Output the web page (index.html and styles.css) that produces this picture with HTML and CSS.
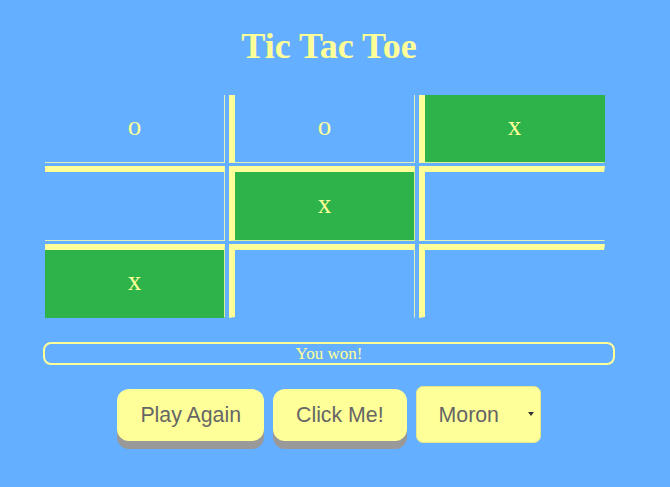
FILE: index.html
```html
<!DOCTYPE html>
<html lang="en">
<head>
<meta charset="utf-8">
<title>Tic Tac Toe</title>
<link rel="stylesheet" href="styles.css">
</head>
<body>
<div class="app">
  <h1 class="title">Tic Tac Toe</h1>
  <div class="board">
    <div class="row">
      <div class="cell">o</div>
      <div class="cell cell--inner">o</div>
      <div class="cell cell--inner cell--last cell--win">x</div>
    </div>
    <div class="row row--lower">
      <div class="cell"></div>
      <div class="cell cell--inner cell--win">x</div>
      <div class="cell cell--inner cell--last"></div>
    </div>
    <div class="row row--lower row--last">
      <div class="cell cell--win">x</div>
      <div class="cell cell--inner"></div>
      <div class="cell cell--inner cell--last"></div>
    </div>
  </div>
  <div class="status">You won!</div>
  <div class="controls">
    <button class="btn">Play Again</button>
    <button class="btn">Click Me!</button>
    <div class="picker">
      <select class="picker__select">
        <option>Moron</option>
      </select>
      <svg class="picker__arrow" width="6" height="4" viewBox="0 0 6 4"><path d="M0 0H6L3 4Z" fill="#333"/></svg>
    </div>
  </div>
</div>
</body>
</html>
```

FILE: styles.css
```css
html, body {
  margin: 0;
  padding: 0;
  background: #64afff;
}

body {
  font-family: "Liberation Serif", "Times New Roman", serif;
  color: #ffff99;
  min-height: 487px;
}

.app {
  width: 572px;
  margin-left: 43px;
  padding-bottom: 20px;
}

.title {
  margin: 27px 0 29px;
  font-size: 36px;
  line-height: 39px;
  font-weight: bold;
  text-align: center;
  color: #ffff99;
}

.board {
  display: flex;
  flex-direction: column;
  gap: 3px;
  padding-left: 2px;
}

.row {
  display: flex;
  gap: 4px;
}

.cell {
  width: 179px;
  height: 63.4px;
  box-sizing: content-box;
  padding-bottom: 4px;
  border-right: 1px solid rgba(255, 255, 170, 0.8);
  border-bottom: 1px solid rgba(255, 255, 170, 0.8);
  display: flex;
  align-items: center;
  justify-content: center;
  font-size: 27px;
  line-height: 27px;
  color: #ffff99;
}

.cell--inner {
  border-left: 6px solid #ffff99;
}

.cell--last {
  border-right-color: transparent;
}

.row--lower .cell {
  border-top: 6px solid #ffff99;
}

.row--last .cell {
  border-bottom-color: transparent;
}

.cell--win {
  background: #2db34a;
}

.status {
  margin-top: 24px;
  height: 19px;
  border: 2px solid #ffff99;
  border-radius: 8px;
  text-align: center;
  font-size: 17px;
  line-height: 19px;
  color: #ffff99;
}

.controls {
  margin-top: 21px;
  display: flex;
  align-items: center;
  justify-content: center;
  gap: 9px;
}

.btn {
  appearance: none;
  -webkit-appearance: none;
  box-sizing: border-box;
  height: 52px;
  padding: 0 23px;
  border: none;
  border-radius: 12px;
  background: #ffff99;
  color: #666;
  font-family: "Liberation Sans", Arial, sans-serif;
  font-size: 21.3px;
  line-height: 24px;
  box-shadow: 0 8px 0 0 #999999;
}

.picker {
  position: relative;
  display: flex;
}

.picker__select {
  appearance: none;
  -webkit-appearance: none;
  width: 125px;
  height: 57px;
  padding: 0 0 0 22px;
  border: 1px solid #e6e68a;
  border-radius: 7px;
  background: #ffff99;
  color: #666;
  font-family: "Liberation Sans", Arial, sans-serif;
  font-size: 21.3px;
}

.picker__arrow {
  position: absolute;
  right: 7px;
  top: 26px;
}
```
